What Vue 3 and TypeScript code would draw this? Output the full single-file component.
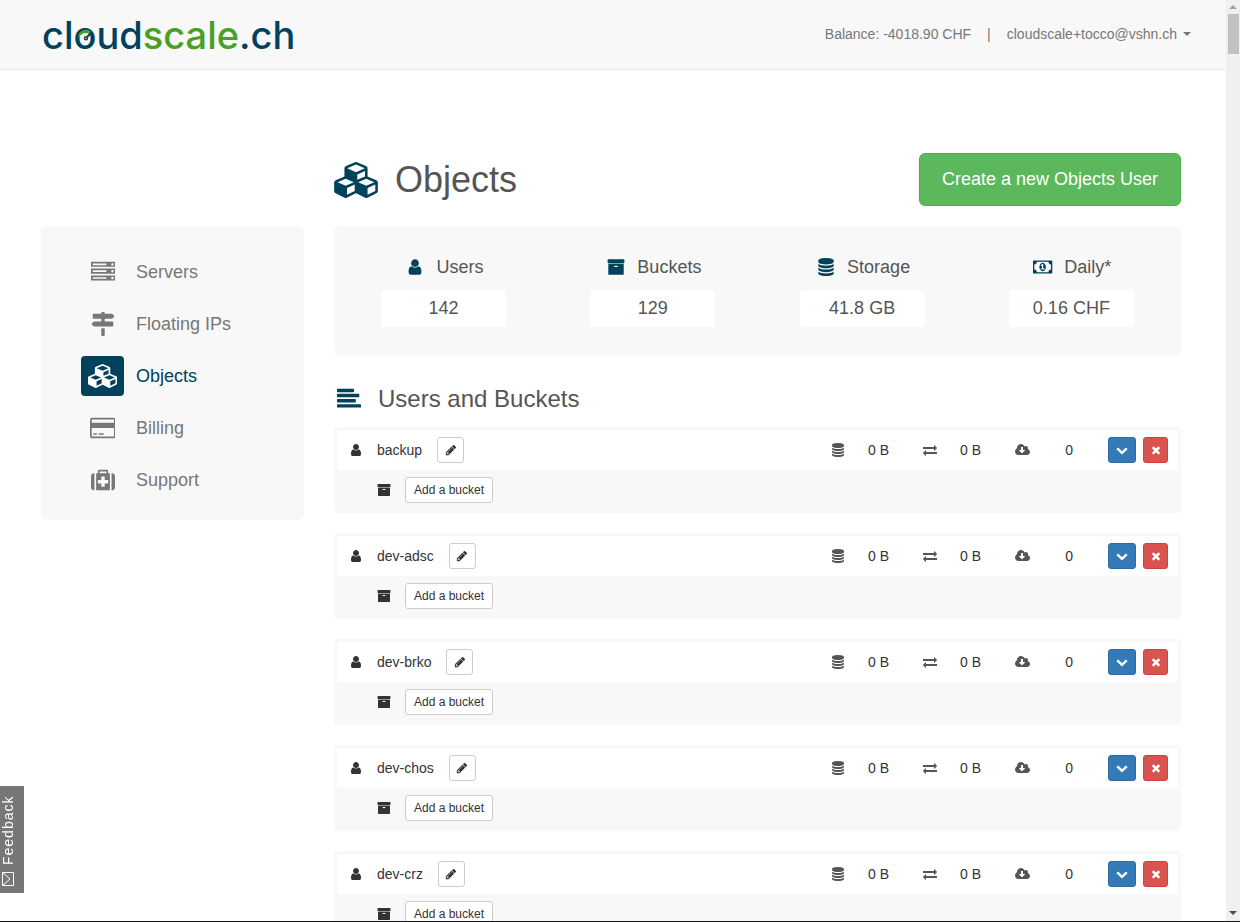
<script setup lang="ts">
interface Glyph {
  w: number
  d: string
}

interface NavItem {
  label: string
  icon: string
  active?: boolean
}

interface Stat {
  label: string
  icon: string
  value: string
}

interface ObjectsUser {
  name: string
  storage: string
  traffic: string
  requests: string
}

const glyphs: Record<string, Glyph> = {
  server: {
    w: 1792,
    d: 'M128 1408h1024v-128h-1024v128zm0-512h1024v-128h-1024v128zm1568 448q0-40-28-68t-68-28-68 28-28 68 28 68 68 28 68-28 28-68zm-1568-960h1024v-128h-1024v128zm1568 448q0-40-28-68t-68-28-68 28-28 68 28 68 68 28 68-28 28-68zm0-512q0-40-28-68t-68-28-68 28-28 68 28 68 68 28 68-28 28-68zm96 832v384h-1792v-384h1792zm0-512v384h-1792v-384h1792zm0-512v384h-1792v-384h1792z',
  },
  signs: {
    w: 1792,
    d: 'M1745 297q10 10 10 23t-10 23l-141 141q-28 28-68 28h-1344q-26 0-45-19t-19-45v-256q0-26 19-45t45-19h576v-64q0-26 19-45t45-19h128q26 0 45 19t19 45v64h512q40 0 68 28zm-977 919h256v512q0 26-19 45t-45 19h-128q-26 0-45-19t-19-45v-512zm832-512q26 0 45 19t19 45v256q0 26-19 45t-45 19h-1344q-40 0-68-28l-141-141q-10-10-10-23t10-23l141-141q28-28 68-28h512v-192h256v192h576z',
  },
  cubes: {
    w: 2176,
    d: 'M640 1632l384-192v-314l-384 164v342zm-64-454l404-173-404-173-404 173zm1088 454l384-192v-314l-384 164v342zm-64-454l404-173-404-173-404 173zm-448-293l384-165v-266l-384 164v267zm-64-379l441-189-441-189-441 189zm1088 518v416q0 36-19 67t-52 47l-448 224q-25 14-57 14t-57-14l-448-224q-4-2-7-4-2 2-7 4l-448 224q-25 14-57 14t-57-14l-448-224q-33-16-52-47t-19-67v-416q0-38 21.500-70t56.500-48l434-186v-400q0-38 21.500-70t56.500-48l448-192q23-10 50-10t50 10l448 192q35 16 56.500 48t21.500 70v400l434 186q36 16 57 48t21 70z',
  },
  card: {
    w: 1920,
    d: 'M1760 128q66 0 113 47t47 113v1216q0 66-47 113t-113 47h-1600q-66 0-113-47t-47-113v-1216q0-66 47-113t113-47h1600zm-1600 128q-13 0-22.500 9.500t-9.500 22.500v224h1664v-224q0-13-9.500-22.500t-22.500-9.500h-1600zm1600 1280q13 0 22.500-9.500t9.500-22.500v-608h-1664v608q0 13 9.500 22.500t22.500 9.500h1600zm-1504-128v-128h256v128h-256zm384 0v-128h384v128h-384z',
  },
  medkit: {
    w: 1792,
    d: 'M1280 1120v-192q0-14-9-23t-23-9h-224v-224q0-14-9-23t-23-9h-192q-14 0-23 9t-9 23v224h-224q-14 0-23 9t-9 23v192q0 14 9 23t23 9h224v224q0 14 9 23t23 9h192q14 0 23-9t9-23v-224h224q14 0 23-9t9-23zm-640-736h512v-128h-512v128zm-384 0v1280h-32q-92 0-158-66t-66-158v-832q0-92 66-158t158-66h32zm1152 0v1280h-1024v-1280h128v-160q0-40 28-68t68-28h576q40 0 68 28t28 68v160h128zm384 224v832q0 92-66 158t-158 66h-32v-1280h32q92 0 158 66t66 158z',
  },
  user: {
    w: 1792,
    d: 'M1536 1399q0 109-62.500 187t-150.500 78h-854q-88 0-150.500-78t-62.500-187q0-85 8.500-160.500t31.500-152 58.500-131 94-89 134.500-34.500q131 128 313 128t313-128q76 0 134.500 34.500t94 89 58.500 131 31.500 152 8.500 160.500zm-256-887q0 159-112.500 271.500t-271.500 112.500-271.500-112.500-112.500-271.500 112.500-271.500 271.500-112.500 271.500 112.500 112.500 271.500z',
  },
  archive: {
    w: 1792,
    d: 'M1088 832q0-26-19-45t-45-19h-256q-26 0-45 19t-19 45 19 45 45 19h256q26 0 45-19t19-45zm576-192v960q0 26-19 45t-45 19h-1408q-26 0-45-19t-19-45v-960q0-26 19-45t45-19h1408q26 0 45 19t19 45zm64-448v256q0 26-19 45t-45 19h-1536q-26 0-45-19t-19-45v-256q0-26 19-45t45-19h1536q26 0 45 19t19 45z',
  },
  database: {
    w: 1792,
    d: 'M896 768q237 0 443-43t325-127v170q0 69-103 128t-280 93.500-385 34.500-385-34.500-280-93.500-103-128v-170q119 84 325 127t443 43zm0 768q237 0 443-43t325-127v170q0 69-103 128t-280 93.500-385 34.500-385-34.500-280-93.500-103-128v-170q119 84 325 127t443 43zm0-384q237 0 443-43t325-127v170q0 69-103 128t-280 93.500-385 34.500-385-34.500-280-93.500-103-128v-170q119 84 325 127t443 43zm0-1152q208 0 385 34.500t280 93.500 103 128v128q0 69-103 128t-280 93.500-385 34.500-385-34.500-280-93.500-103-128v-128q0-69 103-128t280-93.500 385-34.500z',
  },
  money: {
    w: 1920,
    d: 'M768 1152h384v-96h-128v-448h-114l-148 137 77 80q42-37 55-57h2v288h-128v96zm512-256q0 70-21 142t-59.500 134-101.500 101-138 39-138-39-101.500-101-59.500-134-21-142 21-142 59.500-134 101.500-101 138-39 138 39 101.500 101 59.500 134 21 142zm512 256v-512q-106 0-181-75t-75-181h-1152q0 106-75 181t-181 75v512q106 0 181 75t75 181h1152q0-106 75-181t181-75zm128-832v1152q0 26-19 45t-45 19h-1792q-26 0-45-19t-19-45v-1152q0-26 19-45t45-19h1792q26 0 45 19t19 45z',
  },
  alignLeft: {
    w: 1792,
    d: 'M64 1280h1664q64 0 64 64v128q0 64-64 64h-1664q-64 0-64-64v-128q0-64 64-64zM64 896h1280q64 0 64 64v128q0 64-64 64h-1280q-64 0-64-64v-128q0-64 64-64zM64 512h1536q64 0 64 64v128q0 64-64 64h-1536q-64 0-64-64v-128q0-64 64-64zM64 128h1152q64 0 64 64v128q0 64-64 64h-1152q-64 0-64-64v-128q0-64 64-64z',
  },
  pencil: {
    w: 1792,
    d: 'M491 1536l91-91-235-235-91 91v107h128v128h107zm523-928q0-22-22-22-10 0-17 7l-542 542q-7 7-7 17 0 22 22 22 10 0 17-7l542-542q7-7 7-17zm-54-192l416 416-832 832h-416v-416zm683 96q0 53-37 90l-166 166-416-416 166-165q36-38 90-38 53 0 91 38l235 234q37 39 37 91z',
  },
  exchange: {
    w: 1792,
    d: 'M1792 1184v192q0 13-9.500 22.500t-22.500 9.500h-1376v192q0 13-9.500 22.500t-22.500 9.500q-12 0-24-10l-319-320q-9-9-9-22 0-14 9-23l320-320q9-9 23-9 13 0 22.500 9.500t9.500 22.500v192h1376q13 0 22.500 9.500t9.500 22.500zm0-544q0 14-9 23l-320 320q-9 9-23 9-13 0-22.500-9.500t-9.500-22.500v-192h-1376q-13 0-22.500-9.500t-9.500-22.500v-192q0-13 9.500-22.500t22.500-9.500h1376v-192q0-14 9-23t23-9q12 0 24 10l319 319q9 9 9 23z',
  },
  download: {
    w: 1920,
    d: 'M1280 928q0-14-9-23t-23-9h-224v-352q0-13-9.500-22.500t-22.500-9.500h-192q-13 0-22.500 9.500t-9.500 22.500v352h-224q-13 0-22.500 9.500t-9.500 22.500q0 14 9 23l352 352q9 9 23 9t23-9l351-351q10-12 10-24zm640 224q0 159-112.500 271.500t-271.500 112.500h-1088q-185 0-316.500-131.500t-131.500-316.500q0-130 70-240t188-165q-2-30-2-43 0-212 150-362t362-150q156 0 285.500 87t188.500 231q71-62 166-62 106 0 181 75t75 181q0 76-41 138 130 31 213.500 135.500t83.500 238.500z',
  },
  chevron: {
    w: 1792,
    d: 'M1683 808l-742 741q-19 19-45 19t-45-19l-742-741q-19-19-19-45.500t19-45.500l166-165q19-19 45-19t45 19l531 531 531-531q19-19 45-19t45 19l166 165q19 19 19 45.500t-19 45.500z',
  },
  times: {
    w: 1792,
    d: 'M1490 1322q0 40-28 68l-136 136q-28 28-68 28t-68-28l-294-294-294 294q-28 28-68 28t-68-28l-136-136q-28-28-28-68t28-68l294-294-294-294q-28-28-28-68t28-68l136-136q28-28 68-28t68 28l294 294 294-294q28-28 68-28t68 28l136 136q28 28 28 68t-28 68l-294 294 294 294q28 28 28 68z',
  },
}

const box = (name: string): string => `0 0 ${glyphs[name].w} 1792`

const nav: NavItem[] = [
  { label: 'Servers', icon: 'server' },
  { label: 'Floating IPs', icon: 'signs' },
  { label: 'Objects', icon: 'cubes', active: true },
  { label: 'Billing', icon: 'card' },
  { label: 'Support', icon: 'medkit' },
]

const stats: Stat[] = [
  { label: 'Users', icon: 'user', value: '142' },
  { label: 'Buckets', icon: 'archive', value: '129' },
  { label: 'Storage', icon: 'database', value: '41.8 GB' },
  { label: 'Daily*', icon: 'money', value: '0.16 CHF' },
]

const users: ObjectsUser[] = ['backup', 'dev-adsc', 'dev-brko', 'dev-chos', 'dev-crz'].map((name) => ({
  name,
  storage: '0 B',
  traffic: '0 B',
  requests: '0',
}))
</script>

<template>
  <div class="window">
    <div class="page">
      <header class="navbar">
        <a class="brand" href="#" aria-label="cloudscale.ch">
          <span>cl</span><span class="dial">o<svg viewBox="0 0 16 16" aria-hidden="true">
            <path class="sweep" d="M0 9C0 3.500 4 .5 8 .7c2.500 .1 4.300 1 5.300 2.500l-2 1.800C8.500 3 3.500 3.500 0 9z" />
            <path class="needle" d="M9 8L13.500 3.500" />
            <circle class="hub" cx="8" cy="9.200" r="1.500" />
          </svg></span><span>ud</span><span class="green">scale</span><span>.ch</span>
        </a>
        <div class="account">
          <span>Balance: -4018.90 CHF</span>
          <span>|</span>
          <button type="button" class="account-menu">cloudscale+tocco@vshn.ch<i class="caret"></i></button>
        </div>
      </header>

      <div class="layout">
        <div class="title-row">
          <h1>
            <svg class="icon-title" :viewBox="box('cubes')" aria-hidden="true"><path :d="glyphs.cubes.d" /></svg>
            Objects
          </h1>
          <button type="button" class="create">Create a new Objects User</button>
        </div>

        <nav class="sidebar" aria-label="Main">
          <a v-for="item in nav" :key="item.label" href="#" :class="['nav-item', { active: item.active }]">
            <span class="nav-icon">
              <svg :viewBox="box(item.icon)" aria-hidden="true"><path :d="glyphs[item.icon].d" /></svg>
            </span>
            <span>{{ item.label }}</span>
          </a>
        </nav>

        <main class="content">
          <section class="stats">
            <div v-for="stat in stats" :key="stat.label" class="stat">
              <div class="stat-label">
                <span class="stat-icon">
                  <svg :viewBox="box(stat.icon)" aria-hidden="true"><path :d="glyphs[stat.icon].d" /></svg>
                </span>
                {{ stat.label }}
              </div>
              <div class="stat-value">{{ stat.value }}</div>
            </div>
          </section>

          <h2>
            <svg :viewBox="box('alignLeft')" aria-hidden="true"><path :d="glyphs.alignLeft.d" /></svg>
            Users and Buckets
          </h2>

          <section v-for="user in users" :key="user.name" class="group">
            <div class="user-row">
              <span class="cell-icon"><svg :viewBox="box('user')" aria-hidden="true"><path :d="glyphs.user.d" /></svg></span>
              <span class="user-name">{{ user.name }}</span>
              <button type="button" class="btn edit" :aria-label="`Rename ${user.name}`">
                <svg :viewBox="box('pencil')" aria-hidden="true"><path :d="glyphs.pencil.d" /></svg>
              </button>
              <div class="metrics">
                <span class="metric">
                  <span class="cell-icon"><svg :viewBox="box('database')" aria-hidden="true"><path :d="glyphs.database.d" /></svg></span>
                  {{ user.storage }}
                </span>
                <span class="metric">
                  <span class="cell-icon"><svg :viewBox="box('exchange')" aria-hidden="true"><path :d="glyphs.exchange.d" /></svg></span>
                  {{ user.traffic }}
                </span>
                <span class="metric">
                  <span class="cell-icon"><svg :viewBox="box('download')" aria-hidden="true"><path :d="glyphs.download.d" /></svg></span>
                  {{ user.requests }}
                </span>
              </div>
              <div class="actions">
                <button type="button" class="btn expand" :aria-label="`Show ${user.name}`">
                  <svg :viewBox="box('chevron')" aria-hidden="true"><path :d="glyphs.chevron.d" /></svg>
                </button>
                <button type="button" class="btn remove" :aria-label="`Delete ${user.name}`">
                  <svg :viewBox="box('times')" aria-hidden="true"><path :d="glyphs.times.d" /></svg>
                </button>
              </div>
            </div>
            <div class="bucket-row">
              <span class="cell-icon"><svg :viewBox="box('archive')" aria-hidden="true"><path :d="glyphs.archive.d" /></svg></span>
              <button type="button" class="btn">Add a bucket</button>
            </div>
          </section>
        </main>
      </div>
    </div>

    <div class="scrollbar" aria-hidden="true">
      <i class="arrow up"></i>
      <i class="thumb"></i>
      <i class="arrow down"></i>
    </div>

    <button type="button" class="feedback">
      <svg viewBox="0 0 12 14" aria-hidden="true"><path d="M0.500 0.500h11v13h-11zM11.500 0.500L4 7l7.500 6.500" /></svg>
      <span>Feedback</span>
    </button>
  </div>
</template>

<style>
body {
  margin: 0;
  overflow: hidden;
}
</style>

<style scoped>
* {
  box-sizing: border-box;
}

.window {
  display: flex;
  height: 100vh;
  border-bottom: 1px solid #17171a;
  background: #fff;
  color: #333;
  font: 14px/20px "Liberation Sans", Arial, sans-serif;
}

.page {
  flex: 1;
  min-width: 0;
  overflow: hidden;
}

svg {
  display: block;
  flex: none;
  fill: currentColor;
  fill-rule: evenodd;
}

button {
  font: inherit;
  cursor: pointer;
}

a {
  text-decoration: none;
}

.navbar {
  display: flex;
  align-items: center;
  justify-content: space-between;
  height: 70px;
  padding: 0 35px 0 42px;
  border-bottom: 1px solid #e7e7e7;
  background: #f8f8f8;
  color: #777;
}

.brand {
  display: flex;
  color: #00415b;
  font: 500 38px/68px Inter, sans-serif;
}

.brand .green {
  color: #4a9f25;
}

.dial {
  position: relative;
}

.dial svg {
  position: absolute;
  left: 4px;
  top: 28px;
  width: 16px;
  height: 16px;
}

.sweep {
  fill: #4a9f25;
}

.needle {
  stroke: #00415b;
  stroke-width: 2;
}

.hub {
  fill: none;
  stroke: #00415b;
  stroke-width: 1.5;
}

.account {
  display: flex;
  gap: 16px;
  padding-bottom: 2px;
}

.account-menu {
  display: flex;
  align-items: center;
  gap: 6px;
  padding: 0;
  border: 0;
  background: none;
  color: inherit;
}

.caret {
  border: 4px solid transparent;
  border-top-color: currentColor;
  border-bottom: 0;
}

.layout {
  display: grid;
  grid-template-columns: minmax(0, 263fr) minmax(0, 847fr);
  gap: 20px 30px;
  align-items: start;
  padding: 83px 45px 0 41px;
}

.title-row {
  grid-column: 2;
  display: flex;
  align-items: center;
  justify-content: space-between;
}

h1,
h2 {
  display: flex;
  align-items: center;
  margin: 0;
  color: #555;
  font-weight: 400;
}

h1 {
  gap: 17px;
  font-size: 36px;
  line-height: 40px;
}

h1 svg,
h2 svg,
.stat-icon {
  color: #00415b;
}

.icon-title {
  width: 44px;
  height: 36px;
}

.create {
  height: 53px;
  padding: 0 22px 2px;
  border: 1px solid #4cae4c;
  border-radius: 6px;
  background: #5cb85c;
  color: #fff;
  font-size: 18px;
}

.sidebar {
  display: flex;
  flex-direction: column;
  gap: 12px;
  padding: 26px 40px 20px;
  border-radius: 6px;
  background: #f8f8f8;
}

.nav-item {
  display: flex;
  align-items: center;
  gap: 12px;
  color: #777;
  font-size: 18px;
}

.nav-icon {
  display: flex;
  align-items: center;
  justify-content: center;
  width: 43px;
  height: 40px;
  border-radius: 4px;
}

.nav-icon svg {
  height: 24px;
}

.nav-item.active {
  color: #00415b;
}

.active .nav-icon {
  background: #00415b;
  color: #fff;
}

.stats {
  display: grid;
  grid-template-columns: repeat(4, 1fr);
  padding: 28px 5px 29px;
  border-radius: 6px;
  background: #f8f8f8;
  color: #555;
  font-size: 18px;
}

.stat {
  display: flex;
  flex-direction: column;
  align-items: center;
  gap: 10px;
}

.stat-label {
  display: flex;
  align-items: center;
  gap: 10px;
  height: 26px;
}

.stat-icon {
  display: flex;
  justify-content: center;
  width: 23px;
}

.stat-icon svg {
  height: 18px;
}

.stat-value {
  width: 125px;
  border-radius: 4px;
  background: #fff;
  line-height: 37px;
  text-align: center;
}

h2 {
  gap: 17px;
  margin: 30px 0 15px;
  padding-left: 3px;
  font-size: 24px;
  line-height: 26px;
}

h2 svg {
  width: 24px;
  height: 24px;
}

.group {
  margin-bottom: 20px;
  border: 3px solid #f8f8f8;
  border-radius: 4px;
  background: #f8f8f8;
}

.user-row {
  display: flex;
  align-items: center;
  height: 40px;
  padding: 0 10px;
  background: #fff;
}

.cell-icon {
  display: flex;
  justify-content: center;
  width: 18px;
}

.cell-icon svg {
  height: 14px;
}

.user-name {
  margin: 0 15px 0 12px;
}

.btn {
  display: flex;
  align-items: center;
  justify-content: center;
  height: 26px;
  padding: 0 8px;
  border: 1px solid #ccc;
  border-radius: 3px;
  background: #fff;
  color: #333;
  font-size: 12px;
}

.btn svg {
  width: 12px;
  height: 12px;
}

.edit {
  width: 27px;
  padding: 0;
}

.metrics {
  display: flex;
  gap: 32px;
  margin-left: auto;
}

.metric {
  display: flex;
  align-items: center;
  justify-content: space-between;
  width: 60px;
}

.metric .cell-icon {
  color: #555;
}

.actions {
  display: flex;
  gap: 7px;
  margin-left: 35px;
}

.expand {
  width: 28px;
  padding: 0;
  border-color: #2e6da4;
  background: #337ab7;
  color: #fff;
}

.remove {
  width: 25px;
  padding: 0;
  border-color: #d43f3a;
  background: #d9534f;
  color: #fff;
}

.bucket-row {
  display: flex;
  align-items: center;
  gap: 12px;
  height: 40px;
  padding-left: 38px;
}

.scrollbar {
  display: flex;
  flex-direction: column;
  align-items: center;
  width: 14px;
  padding: 5px 0 6px;
  background: #f0f0f0;
}

.arrow {
  border: 4px solid transparent;
}

.up {
  border-top: 0;
  border-bottom-color: #a3a3a3;
}

.down {
  margin-top: auto;
  border-bottom: 0;
  border-top-color: #4c4c4c;
}

.thumb {
  width: 11px;
  height: 40px;
  margin-top: 5px;
  background: #c1c1c1;
}

.feedback {
  position: fixed;
  left: 0;
  bottom: 29px;
  display: flex;
  align-items: center;
  gap: 7px;
  width: 24px;
  height: 107px;
  padding: 7px 0 7px 8px;
  border: 0;
  background: #777;
  color: #fff;
  font-size: 14px;
  line-height: 16px;
  letter-spacing: 1px;
  writing-mode: vertical-rl;
  transform: rotate(180deg);
}

.feedback svg {
  width: 12px;
  height: 14px;
  fill: none;
  stroke: #fff;
}
</style>
